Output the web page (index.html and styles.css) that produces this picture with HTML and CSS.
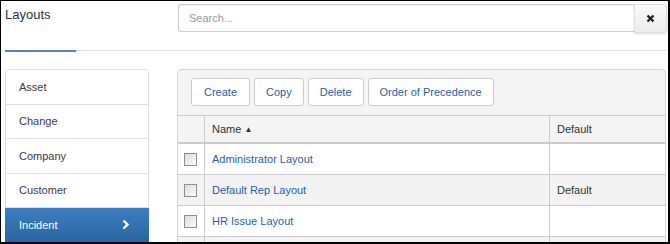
FILE: index.html
```html
<!DOCTYPE html>
<html lang="en">
<head>
    <meta charset="UTF-8">
    <title>Layouts</title>
    <link rel="stylesheet" href="styles.css">
</head>
<body>
    <div class="window">
        <header class="top-bar">
            <h1 class="page-title">Layouts</h1>
            <div class="search">
                <input type="text" class="search-input" placeholder="Search...">
                <button class="search-clear" title="Clear">
                    <svg width="9" height="9" viewBox="0 0 9 9"><path d="M1.5 1.5 L7.5 7.5 M7.5 1.5 L1.5 7.5" stroke="#222" stroke-width="2.4"/></svg>
                </button>
            </div>
        </header>

        <div class="tabs"><div class="tab-active"></div></div>

        <div class="content">
            <ul class="side-list">
                <li>Asset</li>
                <li>Change</li>
                <li>Company</li>
                <li>Customer</li>
                <li class="active">Incident
                    <svg class="chevron" width="8" height="11" viewBox="0 0 8 11"><path d="M1.5 1.5 L5.5 5.5 L1.5 9.5" stroke="#fff" stroke-width="2.4" fill="none"/></svg>
                </li>
            </ul>

            <section class="panel">
                <div class="toolbar">
                    <button class="btn">Create</button>
                    <button class="btn">Copy</button>
                    <button class="btn">Delete</button>
                    <button class="btn">Order of Precedence</button>
                </div>
                <table class="grid">
                    <thead>
                        <tr>
                            <th class="col-check"></th>
                            <th class="col-name">Name <span class="sort">&#9650;</span></th>
                            <th>Default</th>
                        </tr>
                    </thead>
                    <tbody>
                        <tr>
                            <td class="col-check"><span class="check"></span></td>
                            <td><a href="#">Administrator Layout</a></td>
                            <td></td>
                        </tr>
                        <tr class="alt">
                            <td class="col-check"><span class="check"></span></td>
                            <td><a href="#">Default Rep Layout</a></td>
                            <td>Default</td>
                        </tr>
                        <tr>
                            <td class="col-check"><span class="check"></span></td>
                            <td><a href="#">HR Issue Layout</a></td>
                            <td></td>
                        </tr>
                        <tr class="alt">
                            <td class="col-check"></td>
                            <td></td>
                            <td></td>
                        </tr>
                    </tbody>
                </table>
            </section>
        </div>
    </div>
</body>
</html>
```

FILE: styles.css
```css
body {
    margin: 0;
    font-family: "Liberation Sans", Arial, sans-serif;
    font-size: 11px;
    color: #333;
    background: #fff;
}

.window {
    width: 670px;
    height: 244px;
    box-sizing: border-box;
    border-style: solid;
    border-color: #000;
    border-width: 1px 2px 2px 1px;
    overflow: hidden;
}

.top-bar {
    display: flex;
    padding: 3px 1px 0 4px;
}

.page-title {
    margin: 0;
    width: 173px;
    font-size: 13px;
    font-weight: normal;
    color: #2f2f45;
    line-height: 16px;
    padding-top: 3px;
}

.search {
    flex: 1;
    display: flex;
}

.search-input {
    flex: 1;
    height: 28px;
    box-sizing: border-box;
    border: 1px solid #ccc;
    border-right: none;
    border-radius: 3px 0 0 3px;
    padding: 0 10px;
    font-family: inherit;
    font-size: 11px;
    box-shadow: inset 0 1px 1px rgba(0, 0, 0, 0.06);
}

.search-input::placeholder {
    color: #999;
}

.search-clear {
    width: 33px;
    height: 29px;
    border: 1px solid #ddd;
    border-radius: 0 3px 3px 0;
    background: linear-gradient(#fafafa, #ececec);
    box-shadow: 0 1px 2px rgba(0, 0, 0, 0.15);
    display: flex;
    align-items: center;
    justify-content: center;
    padding: 0;
}

.tabs {
    margin: 18px 2px 0 4px;
    border-bottom: 1px solid #ddd;
    height: 0;
}

.tab-active {
    width: 71px;
    border-bottom: 2px solid #5a83b0;
    margin-top: -1px;
}

.content {
    display: flex;
    gap: 28px;
    margin: 18px 2px 0 4px;
}

.side-list {
    list-style: none;
    margin: 0;
    padding: 0;
    width: 144px;
    box-sizing: border-box;
    border: 1px solid #ddd;
    border-radius: 4px 4px 0 0;
    flex-shrink: 0;
}

.side-list li {
    height: 33.5px;
    line-height: 34px;
    padding: 0 13px;
    border-bottom: 1px solid #ddd;
    color: #3a3a4a;
    display: flex;
    justify-content: space-between;
    align-items: center;
}

.side-list li.active {
    background: linear-gradient(#3c7ec2, #2b659f);
    color: #fff;
    border-color: #2b659f;
    margin: 0 -1px;
    padding: 0 14px;
}

.chevron {
    margin-right: 5px;
}

.panel {
    flex: 1;
    background: #f4f4f4;
    border: 1px solid #d6d6d6;
    border-radius: 4px 4px 0 0;
    padding-top: 8px;
}

.toolbar {
    display: flex;
    gap: 4px;
    padding: 0 13px 9px;
}

.btn {
    height: 28px;
    padding: 0 11px;
    background: #fff;
    border: 1px solid #ccc;
    border-radius: 3px;
    font-family: inherit;
    font-size: 11px;
    color: #1f5fa8;
}

.btn:first-child {
    padding: 0 12px;
}

.grid {
    width: 100%;
    border-collapse: collapse;
}

.grid th {
    text-align: left;
    font-weight: normal;
    height: 26px;
    padding: 0 7px;
    border-top: 1px solid #ccc;
    border-bottom: 2px solid #ccc;
    border-left: 1px solid #ccc;
}

.grid th:first-child,
.grid td:first-child {
    border-left: none;
}

.sort {
    font-size: 8px;
    vertical-align: 1px;
}

.grid td {
    height: 30px;
    padding: 0 7px;
    border-bottom: 1px solid #ccc;
    border-left: 1px solid #ccc;
    background: #fff;
}

.grid tr.alt td {
    background: #f3f3f3;
}

.grid .col-check {
    width: 13px;
    padding: 0 7px 0 6px;
}

.col-name {
    width: 330px;
}

.grid a {
    color: #1f5fa8;
    text-decoration: none;
}

.check {
    display: block;
    width: 11px;
    height: 11px;
    border: 1px solid #8f8f8f;
    background: linear-gradient(135deg, #dcdcdc, #fbfbfb);
}
```
